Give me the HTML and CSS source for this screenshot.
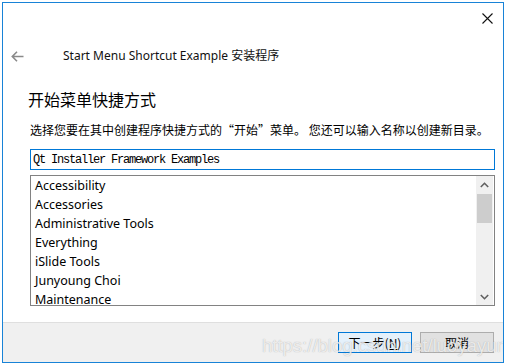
FILE: index.html
```html
<!DOCTYPE html>
<html lang="zh-CN">
<head>
    <meta charset="UTF-8">
    <meta name="viewport" content="width=device-width, initial-scale=1.0">
    <title>Start Menu Shortcut Example 安装程序</title>
    <link rel="stylesheet" href="styles.css">
</head>
<body>
    <div class="window">
        <!-- Заголовок окна -->
        <div class="titlebar">
            <button class="close-btn" aria-label="关闭">
                <svg width="11" height="11" viewBox="0 0 11 11">
                    <path d="M0.5 0.5 L10.5 10.5 M10.5 0.5 L0.5 10.5" stroke="#111" stroke-width="1.1" fill="none"/>
                </svg>
            </button>
        </div>

        <div class="header">
            <span class="back">
                <svg width="13" height="11" viewBox="0 0 13 11">
                    <path d="M6 0.8 L1.3 5.5 L6 10.2 M1.3 5.5 L12.5 5.5" stroke="#8a8a8a" stroke-width="1.6" fill="none"/>
                </svg>
            </span>
            <span class="app-title">Start Menu Shortcut Example 安装程序</span>
        </div>

        <div class="content">
            <h1 class="page-title">开始菜单快捷方式</h1>
            <p class="desc">选择您要在其中创建程序快捷方式的“开始”菜单。 您还可以输入名称以创建新目录。</p>
            <input class="dir-input" type="text" value="Qt Installer Framework Examples">

            <div class="list-box">
                <ul class="list">
                    <li>Accessibility</li>
                    <li>Accessories</li>
                    <li>Administrative Tools</li>
                    <li>Everything</li>
                    <li>iSlide Tools</li>
                    <li>Junyoung Choi</li>
                    <li>Maintenance</li>
                </ul>
                <div class="scrollbar">
                    <span class="arrow">
                        <svg width="9" height="6" viewBox="0 0 9 6">
                            <path d="M0.8 5 L4.5 1.3 L8.2 5" stroke="#606060" stroke-width="1.6" fill="none"/>
                        </svg>
                    </span>
                    <div class="track">
                        <div class="thumb"></div>
                    </div>
                    <span class="arrow">
                        <svg width="9" height="6" viewBox="0 0 9 6">
                            <path d="M0.8 1 L4.5 4.7 L8.2 1" stroke="#606060" stroke-width="1.6" fill="none"/>
                        </svg>
                    </span>
                </div>
            </div>
        </div>

        <div class="footer">
            <button class="btn btn-primary">下一步(<u>N</u>)</button>
            <button class="btn">取消</button>
        </div>

        <div class="watermark">https://blog.csdn.net/luoyayun361</div>
    </div>
</body>
</html>
```

FILE: styles.css
```css
/* Окно установщика */
body {
    margin: 0;
    background: #fff;
    font-family: "Noto Sans", "Noto Sans CJK SC", sans-serif;
    color: #000;
}

.window {
    position: relative;
    margin: 2px 2px 0 2px;
    height: 361px;
    box-sizing: border-box;
    border: 1px solid #1883d7;
    display: flex;
    flex-direction: column;
    overflow: hidden;
}

.titlebar {
    height: 30px;
    display: flex;
    justify-content: flex-end;
    align-items: center;
}

.close-btn {
    border: none;
    background: none;
    padding: 0;
    margin-right: 9px;
    width: 14px;
    height: 14px;
    display: flex;
    align-items: center;
    justify-content: center;
}

.header {
    margin-top: 14px;
    height: 18px;
    display: flex;
    align-items: center;
}

.back {
    display: flex;
    margin-left: 8px;
    width: 52px;
}

.app-title {
    font-size: 12px;
    line-height: 18px;
    color: #111;
}

.content {
    padding: 0 8px 0 27px;
    flex: 1;
}

.page-title {
    margin: 24px 0 0 -2px;
    font-size: 16px;
    line-height: 20px;
    font-weight: normal;
    font-family: "Noto Sans CJK SC", sans-serif;
}

.desc {
    margin: 13px 0 0 0;
    font-size: 12px;
    line-height: 16px;
    font-family: "Noto Sans CJK SC", sans-serif;
    white-space: nowrap;
}

.dir-input {
    display: block;
    margin-top: 11px;
    width: 100%;
    height: 21px;
    box-sizing: border-box;
    border: 1px solid #0078d7;
    padding: 0 2px;
    font-family: "Liberation Mono", monospace;
    font-size: 12px;
    letter-spacing: -1.2px;
    color: #000;
    outline: none;
}

.list-box {
    margin-top: 5px;
    height: 131px;
    box-sizing: border-box;
    border: 1px solid #828282;
    display: flex;
}

.list {
    flex: 1;
    list-style: none;
    margin: 0;
    padding: 0 0 0 4px;
    overflow: hidden;
}

.list li {
    height: 19px;
    line-height: 19px;
    font-size: 12.5px;
    color: #000;
}

.scrollbar {
    width: 17px;
    margin: 0 1px 0 0;
    background: #f0f0f0;
    display: flex;
    flex-direction: column;
}

.arrow {
    height: 17px;
    display: flex;
    align-items: center;
    justify-content: center;
}

.track {
    flex: 1;
    padding: 1px 1px 0 1px;
}

.thumb {
    height: 29px;
    background: #cdcdcd;
}

.footer {
    height: 40px;
    box-sizing: border-box;
    border-top: 1px solid #dfdfdf;
    background: #f0f0f0;
    display: flex;
    justify-content: flex-end;
    align-items: center;
    gap: 8px;
    padding-right: 9px;
}

.btn {
    width: 74px;
    height: 21px;
    box-sizing: border-box;
    border: 1px solid #adadad;
    background: #e1e1e1;
    font-family: "Noto Sans CJK SC", sans-serif;
    font-size: 12px;
    color: #000;
    padding: 0;
    margin-top: -1px;
}

.btn-primary {
    border-color: #0078d7;
    background: #e5f1fb;
}

.watermark {
    position: absolute;
    left: 259px;
    top: 332px;
    font-family: "Liberation Sans", Arial, sans-serif;
    font-size: 18.5px;
    color: rgba(255, 255, 255, 0.75);
    text-shadow: 0 0 1px rgba(120, 120, 120, 0.6);
    white-space: nowrap;
    pointer-events: none;
}
```
